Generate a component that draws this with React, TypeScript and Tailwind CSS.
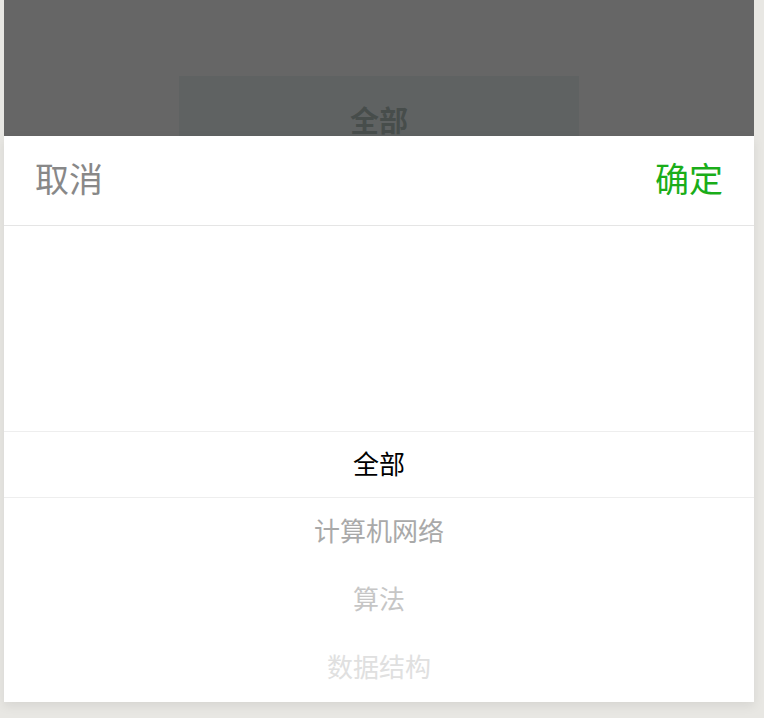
import * as React from "react";

const ITEMS = [
  { label: "全部", className: "text-black" },
  { label: "计算机网络", className: "text-[#a9a9a9]" },
  { label: "算法", className: "text-[#c6c6c6]" },
  { label: "数据结构", className: "text-[#e0e0e0]" },
] as const;

const FONT = "font-['Noto_Sans_CJK_SC','Noto_Sans',sans-serif]";

export default function App() {
  return (
    <div className={`h-[718px] w-[764px] overflow-hidden bg-[#e8e7e3] ${FONT}`}>
      <div className="ml-[4px] w-[750px]">
        {/* dimmed page behind the sheet */}
        <div className="h-[136px] overflow-hidden bg-[#666666] pt-[76px]">
          <div className="mx-auto flex h-[80px] w-[400px] justify-center bg-[#5f6262] pt-[29px]">
            <span className="text-[29px] font-bold leading-none text-[#474d4b]">全部</span>
          </div>
        </div>

        {/* picker sheet */}
        <div className="bg-white shadow-[0_4px_10px_rgba(0,0,0,0.08)]">
          <div className="flex h-[90px] items-center justify-between border-b border-[#e5e5e5] px-[31px] pb-[6px]">
            <button className="text-[34px] leading-none text-[#888888]">取消</button>
            <button className="text-[34px] leading-none text-[#1aad19]">确定</button>
          </div>

          <div className="flex flex-col">
            <div className="h-[68px]" />
            <div className="h-[68px]" />
            <div className="h-[69px]" />
            {ITEMS.map((item, i) => (
              <div
                key={item.label}
                className={`flex items-center justify-center pb-[4px] text-[26px] leading-none ${item.className} ${
                  i === 0 ? "h-[67px] border-y border-[#eeeeee]" : "h-[68px]"
                }`}
              >
                {item.label}
              </div>
            ))}
          </div>
        </div>
      </div>
    </div>
  );
}
